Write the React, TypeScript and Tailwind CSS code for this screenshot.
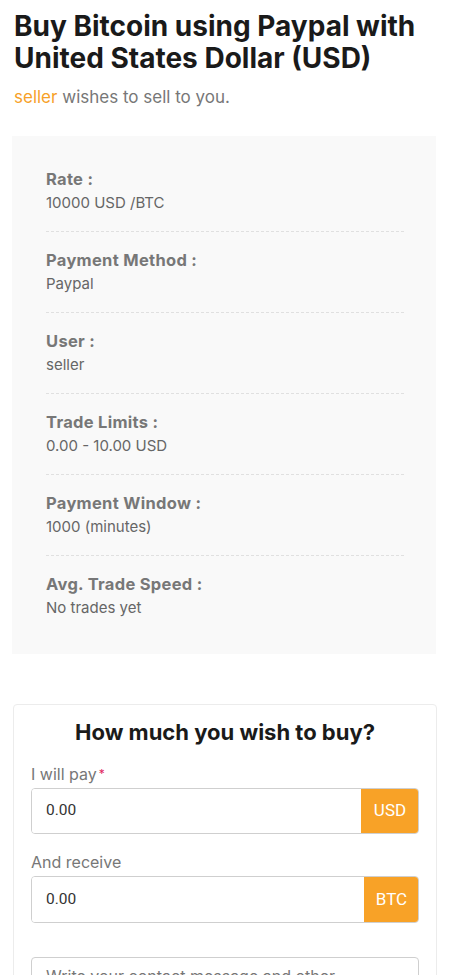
import React from "react";

const items = [
  { label: "Rate :", value: "10000 USD /BTC" },
  { label: "Payment Method :", value: "Paypal" },
  { label: "User :", value: "seller" },
  { label: "Trade Limits :", value: "0.00 - 10.00 USD" },
  { label: "Payment Window :", value: "1000 (minutes)" },
  { label: "Avg. Trade Speed :", value: "No trades yet" },
];

export default function App() {
  return (
    <div
      className="w-[450px] min-h-[975px] bg-white overflow-hidden"
      style={{ fontFamily: "Inter, 'Noto Sans', sans-serif" }}
    >
      <div className="px-[14px] pt-[10px]">
        <h1 className="text-[28px] leading-[32px] font-bold text-[#1a1a1a]">
          Buy Bitcoin using Paypal with United States Dollar (USD)
        </h1>
        <p className="mt-[11px] text-[17px] leading-[24px] text-[#777]">
          <span className="text-[#f7a128]">seller</span> wishes to sell to you.
        </p>
      </div>

      <div className="ml-3 mr-[14px] mt-[27px] bg-[#f9f9f9] pl-[34px] pr-8 pt-[31px] pb-[18px]">
        {items.map((it, i) => (
          <div
            key={it.label}
            className={
              i < items.length - 1
                ? "pb-4 mb-4 border-b border-dashed border-[#e0e0e0]"
                : "pb-4"
            }
          >
            <div className="text-[16.5px] leading-[24px] font-bold text-[#777] tracking-[0.3px]">{it.label}</div>
            <div className="text-[15px] leading-[24px] text-[#666]">{it.value}</div>
          </div>
        ))}
      </div>

      <div className="ml-[13px] mr-[13px] mt-[50px] border border-[#ececec] rounded-[4px] px-[17px] pt-3 pb-6">
        <h2 className="text-center text-[22px] leading-[30px] font-bold text-[#1a1a1a]">
          How much you wish to buy?
        </h2>
        <label className="block mt-[15px] text-[16px] leading-[24px] text-[#777]">
          I will pay<span className="text-[#e0245e] text-[12px] align-top ml-[2px]">*</span>
        </label>
        <div className="mt-[2px] flex h-[46px] rounded-[4px] overflow-hidden border border-[#cfcfcf]">
          <div
            className="flex-1 flex items-center pl-[14px] text-[15.5px] text-[#333] bg-white"
            style={{ fontFamily: "Roboto, 'Liberation Sans', sans-serif" }}
          >
            0.00
          </div>
          <div
            className="w-[58px] -my-px -mr-px flex items-center justify-center bg-[#f8a227] text-white text-[17px]"
            style={{ fontFamily: "Roboto, 'Liberation Sans', sans-serif" }}
          >
            USD
          </div>
        </div>
        <label className="block mt-[16px] text-[16px] leading-[24px] text-[#777]">And receive</label>
        <div className="mt-[2px] flex h-[47px] rounded-[4px] overflow-hidden border border-[#cfcfcf]">
          <div
            className="flex-1 flex items-center pl-[14px] text-[15.5px] text-[#333] bg-white"
            style={{ fontFamily: "Roboto, 'Liberation Sans', sans-serif" }}
          >
            0.00
          </div>
          <div
            className="w-[55px] -my-px -mr-px flex items-center justify-center bg-[#f8a227] text-white text-[17px]"
            style={{ fontFamily: "Roboto, 'Liberation Sans', sans-serif" }}
          >
            BTC
          </div>
        </div>
        <div className="mt-[34px] h-[90px] rounded-[4px] border border-[#cfcfcf] px-[14px] pt-[6px] text-[16px] text-[#777]">
          Write your contact message and other information for the trade here...
        </div>
      </div>
    </div>
  );
}
